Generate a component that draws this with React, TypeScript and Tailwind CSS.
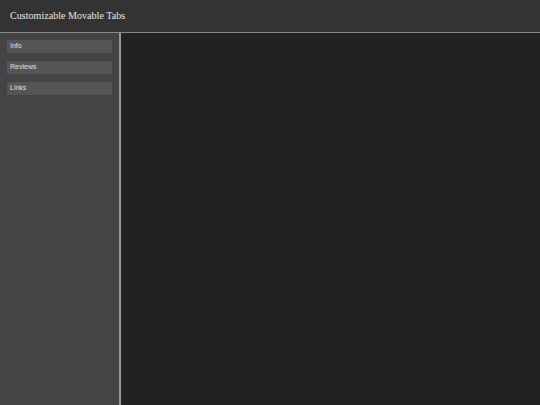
const tabs = ["Info", "Reviews", "Links"];

export default function App() {
  return (
    <div className="flex h-[405px] w-[540px] flex-col bg-[#222] font-['Liberation_Sans',Arial,sans-serif]">
      <header className="flex h-[33px] shrink-0 items-center border-b border-[#888] bg-[#333] px-[10px]">
        <h1 className="font-['Liberation_Serif',serif] text-[10.1px] text-[#e6e6e6]">
          Customizable Movable Tabs
        </h1>
      </header>
      <div className="flex min-h-0 flex-1">
        <aside className="flex w-[121px] shrink-0 flex-col gap-[8px] border-r-2 border-[#999] bg-[#444] px-[7px] pt-[7px]">
          {tabs.map((tab) => (
            <button
              key={tab}
              type="button"
              className="flex h-[13px] items-center bg-[#555] px-[3px] text-left text-[7px] text-[#e0e0e0]"
            >
              {tab}
            </button>
          ))}
        </aside>
        <main className="flex-1 bg-[#222]" />
      </div>
    </div>
  );
}
